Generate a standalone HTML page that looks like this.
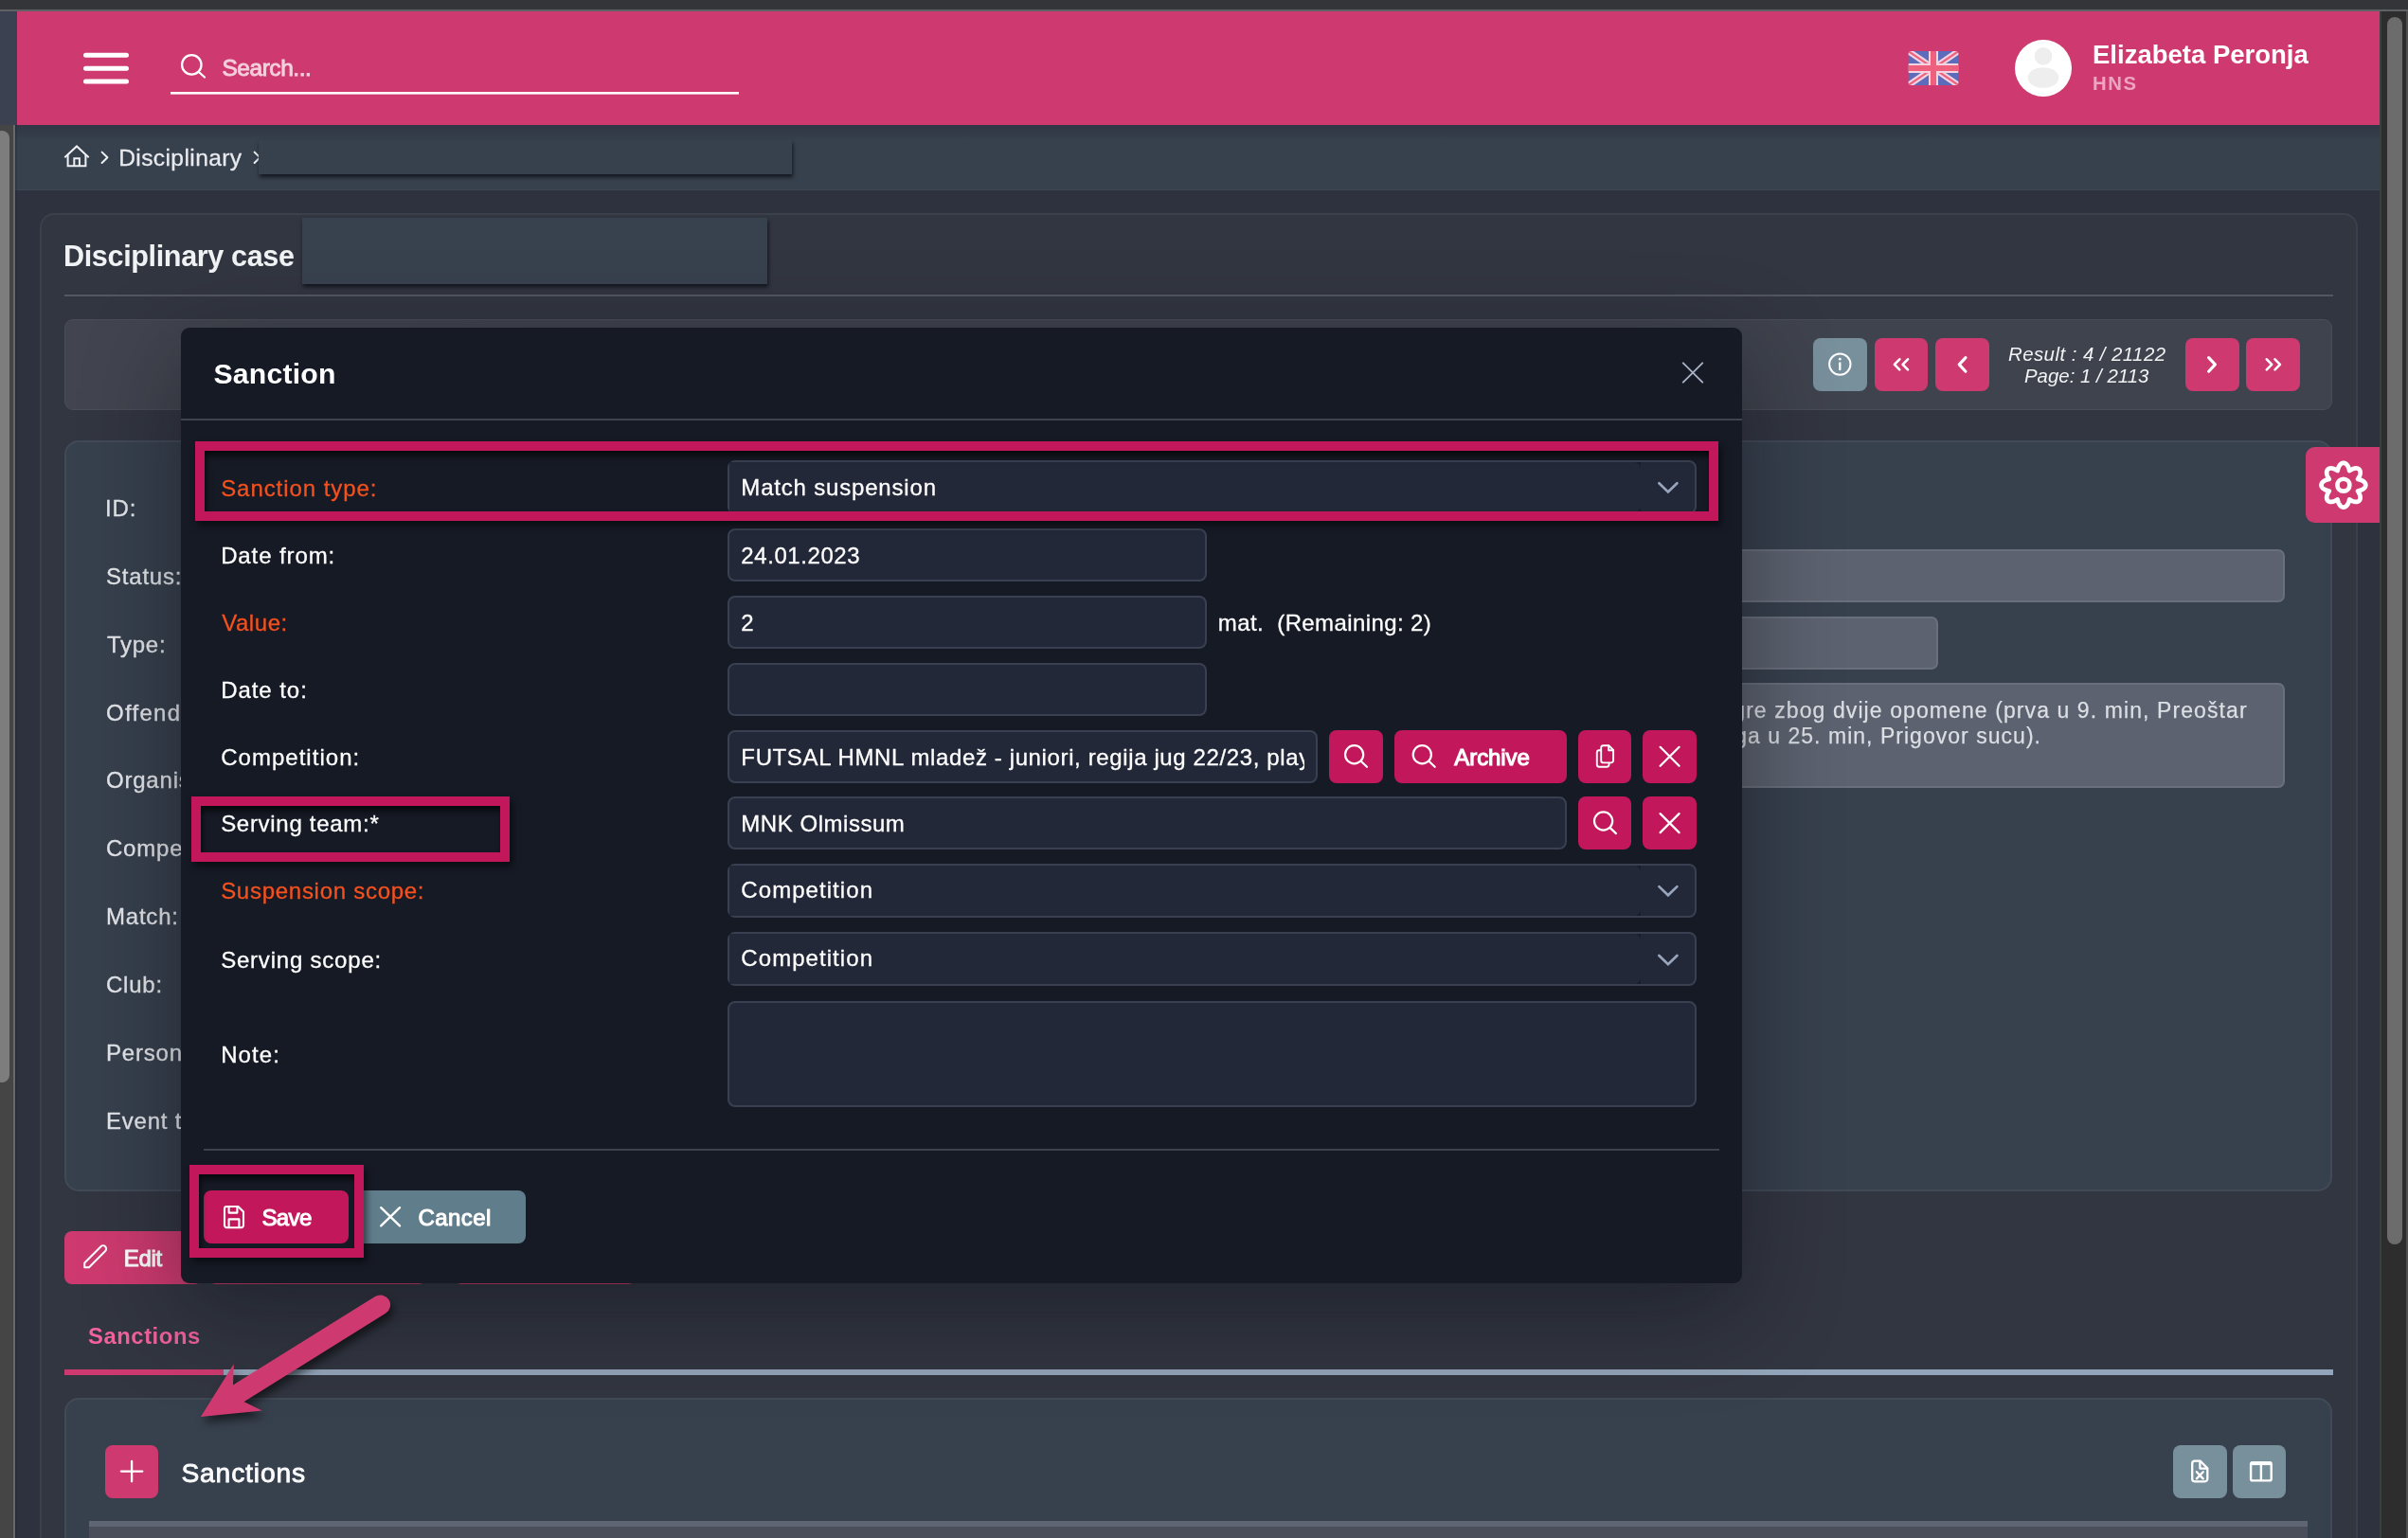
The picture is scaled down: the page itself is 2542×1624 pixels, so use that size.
<!DOCTYPE html>
<html lang="en">
<head>
<meta charset="utf-8">
<title>Disciplinary case - Sanction</title>
<style>
*{box-sizing:border-box;margin:0;padding:0}
html,body{width:2542px;height:1624px;overflow:hidden;background:#2e323f;font-family:"Liberation Sans",sans-serif}
#root{position:absolute;left:0;top:0;width:2542px;height:1624px;overflow:hidden;will-change:transform}
.a{position:absolute}
.t{position:absolute;white-space:pre;display:block}
svg{position:absolute;left:0;top:0;overflow:visible}
.pbtn{position:absolute;background:#ce3a6f;border-radius:8px}
.mbtn{position:absolute;background:#c2185b;border-radius:8px}
.gbtn{position:absolute;background:#78909c;border-radius:8px}
.fld{position:absolute;background:#5c626f;border:2px solid #696f7b;border-radius:7px}
.inp{position:absolute;background:#232838;border:2px solid #394051;border-radius:8px}
.hl{position:absolute;border:10px solid #c2185b;box-shadow:3px 5px 7px rgba(0,0,0,.5), inset 2px 6px 7px -1px rgba(0,0,0,.7)}
</style>
</head>
<body>
<div id="root">
<!-- header -->
<div class="a" style="left:18px;top:12px;width:2494.5px;height:120px;background:#ce3a6f"></div>
<svg width="2542" height="210" viewBox="0 0 2542 210">
  <g stroke="#fff" stroke-width="5" stroke-linecap="round" fill="none">
    <path d="M90.5 58.3H133.5M90.5 72.2H133.5M90.5 86.1H133.5"/>
  </g>
  <g stroke="#fff" stroke-width="2.3" stroke-linecap="round" fill="none">
    <circle cx="202.3" cy="68.4" r="10.2"/><path d="M209.8 76L216 81.5"/>
  </g>
  <rect x="180" y="97" width="600" height="2.6" fill="#fff"/>
  <!-- flag -->
  <g transform="translate(2014.5,54)">
    <clipPath id="fc"><rect x="0" y="0" width="53" height="36" rx="3.5"/></clipPath>
    <g clip-path="url(#fc)">
      <rect width="53" height="36" fill="#5c6bba"/>
      <path d="M0 0L53 36M53 0L0 36" stroke="#f3d3e0" stroke-width="6.5"/>
      <path d="M0 0L53 36M53 0L0 36" stroke="#ef5f7e" stroke-width="2.2"/>
      <path d="M26.5 0V36M0 18H53" stroke="#f3d3e0" stroke-width="10"/>
      <path d="M26.5 0V36M0 18H53" stroke="#ef5f7e" stroke-width="6"/>
    </g>
  </g>
  <!-- avatar -->
  <clipPath id="ac"><circle cx="2157" cy="72" r="30"/></clipPath>
  <circle cx="2157" cy="72" r="30" fill="#fff"/>
  <g clip-path="url(#ac)" fill="#eeeeee"><circle cx="2157" cy="59.4" r="9.3"/><ellipse cx="2157" cy="82" rx="16.3" ry="10.8"/></g>
</svg>
<span class="t" id="search" style="top:60.00px;font-size:24.5px;line-height:24.5px;color:#f4cfdc;left:234.45px;letter-spacing:-0.455px;-webkit-text-stroke:0.9px #f4cfdc;">Search...</span><span class="t" id="uname" style="top:44.00px;font-size:27.5px;line-height:27.5px;color:#ffffff;left:2209.00px;font-weight:700;letter-spacing:0.005px;">Elizabeta Peronja</span><span class="t" id="uorg" style="top:78.00px;font-size:20.3px;line-height:20.3px;color:#eda5c0;left:2209.00px;font-weight:700;letter-spacing:1.604px;">HNS</span>
<!-- breadcrumb -->
<div class="a" style="left:16px;top:132px;width:2497px;height:69px;background:#37404d;border-bottom:1.5px solid #3e4754"></div>
<div class="a" style="left:16px;top:132px;width:2497px;height:16px;background:linear-gradient(rgba(30,28,44,.28),rgba(30,28,44,0))"></div>
<svg width="2542" height="210" viewBox="0 0 2542 210">
  <g stroke="#eef0f3" stroke-width="2" fill="none" stroke-linejoin="miter" stroke-linecap="butt">
    <path d="M68.3 166.3L81 154.4L93.7 166.3"/>
    <path d="M71.6 163.6V175.3H90.4V163.6"/>
    <path d="M78.3 175.3V167.2H83.9V175.3"/>
    <path d="M107.6 160.6L113.4 166.3L107.6 172" stroke-linecap="round" stroke-linejoin="round"/>
    <path d="M268.6 160.6L274.4 166.3L268.6 172" stroke-linecap="round" stroke-linejoin="round"/>
  </g>
</svg>
<span class="t" id="bc1" style="top:155.00px;font-size:24.6px;line-height:24.6px;color:#e8eaee;left:125.15px;letter-spacing:0.388px;-webkit-text-stroke:0.3px #e8eaee;">Disciplinary</span>
<div class="a" style="left:273px;top:147.5px;width:563px;height:36.5px;background:#37404d;box-shadow:1px 3px 4px rgba(8,10,18,.75)"></div>
<!-- card -->
<div class="a" style="left:42px;top:225px;width:2446.6px;height:1460px;background:#323641;border:2px solid #3b404b;border-radius:15px"></div>
<span class="t" id="title" style="top:255.00px;font-size:30.6px;line-height:30.6px;color:#f1f2f4;left:67.00px;font-weight:700;letter-spacing:-0.374px;">Disciplinary case</span>
<div class="a" style="left:319.3px;top:230px;width:490.4px;height:69.5px;background:#38414e;box-shadow:1px 3px 4px rgba(8,10,18,.75)"></div>
<div class="a" style="left:68px;top:311px;width:2395px;height:2px;background:#525763"></div>
<!-- nav panel -->
<div class="a" style="left:68px;top:337px;width:2394px;height:96px;background:linear-gradient(90deg,#42454f 0%,#3f434d 25%);border:1.5px solid #494d57;border-radius:9px"></div>
<div class="gbtn" style="left:1914px;top:357px;width:57px;height:56px"></div>
<div class="pbtn" style="left:1979px;top:357px;width:56px;height:56px"></div>
<div class="pbtn" style="left:2043px;top:357px;width:56.5px;height:56px"></div>
<div class="pbtn" style="left:2307px;top:357px;width:56.5px;height:56px"></div>
<div class="pbtn" style="left:2371px;top:357px;width:57px;height:56px"></div>
<svg width="2542" height="1624" viewBox="0 0 2542 1624">
  <g stroke="#fff" fill="none" stroke-linecap="round" stroke-linejoin="round">
    <circle cx="1942.3" cy="384.6" r="11.2" stroke-width="2"/>
    <path d="M1942.3 383.4V390.2" stroke-width="2.3"/><circle cx="1942.3" cy="379.2" r="1.35" fill="#fff" stroke="none"/>
    <g stroke-width="2.6">
      <path d="M2005.3 379.3L1999.9 384.8L2005.3 390.3M2014 379.3L2008.6 384.8L2014 390.3"/>
      <path d="M2392.8 379.3L2398.2 384.8L2392.8 390.3M2401.5 379.3L2406.9 384.8L2401.5 390.3"/>
    </g>
    <g stroke-width="3.1">
      <path d="M2075 377.6L2068.2 384.9L2075 392.2"/>
      <path d="M2331.6 377.6L2338.4 384.9L2331.6 392.2"/>
    </g>
  </g>
</svg>
<span class="t" id="res1" style="top:364.00px;font-size:20.4px;line-height:20.4px;color:#f2f3f5;left:2120.00px;font-style:italic;letter-spacing:0.454px;">Result : 4 / 21122</span><span class="t" id="res2" style="top:387.00px;font-size:20.4px;line-height:20.4px;color:#f2f3f5;left:2137.00px;font-style:italic;letter-spacing:0.016px;">Page: 1 / 2113</span>
<!-- details panel -->
<div class="a" style="left:68px;top:465px;width:2394px;height:792.5px;background:#37404d;border:2px solid #424a58;border-radius:15px"></div>
<span class="t" id="bl0" style="top:525.00px;font-size:24.0px;line-height:24.0px;color:#e6e8ec;left:110.95px;letter-spacing:0.900px;-webkit-text-stroke:0.3px #e6e8ec;">ID:</span><span class="t" id="bl1" style="top:597.00px;font-size:24.0px;line-height:24.0px;color:#e6e8ec;left:111.95px;letter-spacing:0.810px;-webkit-text-stroke:0.3px #e6e8ec;">Status:</span><span class="t" id="bl2" style="top:669.00px;font-size:24.0px;line-height:24.0px;color:#e6e8ec;left:112.95px;letter-spacing:0.742px;-webkit-text-stroke:0.3px #e6e8ec;">Type:</span><span class="t" id="bl3" style="top:741.00px;font-size:24.0px;line-height:24.0px;color:#e6e8ec;left:111.95px;letter-spacing:1.300px;-webkit-text-stroke:0.3px #e6e8ec;">Offender:</span><span class="t" id="bl4" style="top:812.00px;font-size:24.0px;line-height:24.0px;color:#e6e8ec;left:111.95px;letter-spacing:0.800px;-webkit-text-stroke:0.3px #e6e8ec;">Organisation:</span><span class="t" id="bl5" style="top:884.00px;font-size:24.0px;line-height:24.0px;color:#e6e8ec;left:111.95px;letter-spacing:0.800px;-webkit-text-stroke:0.3px #e6e8ec;">Competition:</span><span class="t" id="bl6" style="top:956.00px;font-size:24.0px;line-height:24.0px;color:#e6e8ec;left:111.95px;letter-spacing:0.800px;-webkit-text-stroke:0.3px #e6e8ec;">Match:</span><span class="t" id="bl7" style="top:1028.00px;font-size:24.0px;line-height:24.0px;color:#e6e8ec;left:111.95px;letter-spacing:0.800px;-webkit-text-stroke:0.3px #e6e8ec;">Club:</span><span class="t" id="bl8" style="top:1100.00px;font-size:24.0px;line-height:24.0px;color:#e6e8ec;left:111.95px;letter-spacing:0.800px;-webkit-text-stroke:0.3px #e6e8ec;">Person:</span><span class="t" id="bl9" style="top:1172.00px;font-size:24.0px;line-height:24.0px;color:#e6e8ec;left:111.95px;letter-spacing:0.800px;-webkit-text-stroke:0.3px #e6e8ec;">Event type:</span>
<div class="fld" style="left:700px;top:580px;width:1712px;height:55.7px"></div>
<div class="fld" style="left:700px;top:651px;width:1346px;height:55.7px"></div>
<div class="fld" style="left:700px;top:721.2px;width:1712px;height:111.2px"></div>
<span class="t" id="desc1" style="top:739.00px;font-size:23.0px;line-height:23.0px;color:#dcdfe4;left:1823.05px;letter-spacing:1.089px;-webkit-text-stroke:0.25px #dcdfe4;">igre zbog dvije opomene (prva u 9. min, Preoštar</span><span class="t" id="desc2" style="top:766.00px;font-size:23.0px;line-height:23.0px;color:#dcdfe4;left:1730.19px;letter-spacing:1.026px;-webkit-text-stroke:0.25px #dcdfe4;">start, druga u 25. min, Prigovor sucu).</span>
<!-- settings tab -->
<div class="a" style="left:2434px;top:472px;width:78.2px;height:80px;background:#ce3a6f;border-radius:9.5px 0 0 9.5px"></div>
<svg width="2542" height="1624" viewBox="0 0 2542 1624">
  <g stroke="#fff" stroke-width="4.7" fill="none" stroke-linejoin="round"><path d="M2497.30 512.20 L2497.29 512.51 L2497.25 512.81 L2497.19 513.11 L2497.10 513.42 L2496.99 513.71 L2496.85 514.01 L2496.69 514.29 L2496.51 514.58 L2496.31 514.85 L2496.08 515.12 L2495.84 515.38 L2495.57 515.63 L2495.29 515.88 L2494.99 516.11 L2494.67 516.33 L2494.34 516.55 L2494.00 516.75 L2493.64 516.94 L2493.27 517.12 L2492.90 517.29 L2492.51 517.45 L2492.12 517.60 L2491.72 517.73 L2491.33 517.86 L2490.93 517.98 L2490.53 518.09 L2490.14 518.19 L2489.76 518.29 L2489.39 518.38 L2489.05 518.48 L2489.22 518.78 L2489.42 519.11 L2489.62 519.45 L2489.83 519.80 L2490.03 520.15 L2490.23 520.52 L2490.42 520.89 L2490.60 521.27 L2490.77 521.65 L2490.93 522.03 L2491.08 522.42 L2491.21 522.81 L2491.33 523.20 L2491.43 523.58 L2491.51 523.97 L2491.58 524.35 L2491.62 524.73 L2491.65 525.10 L2491.66 525.46 L2491.65 525.82 L2491.62 526.17 L2491.57 526.51 L2491.50 526.84 L2491.41 527.15 L2491.30 527.46 L2491.16 527.75 L2491.01 528.02 L2490.84 528.28 L2490.65 528.52 L2490.45 528.75 L2490.22 528.95 L2489.98 529.14 L2489.72 529.31 L2489.45 529.46 L2489.16 529.60 L2488.85 529.71 L2488.54 529.80 L2488.21 529.87 L2487.87 529.92 L2487.52 529.95 L2487.16 529.96 L2486.80 529.95 L2486.43 529.92 L2486.05 529.88 L2485.67 529.81 L2485.28 529.73 L2484.90 529.63 L2484.51 529.51 L2484.12 529.38 L2483.73 529.23 L2483.35 529.07 L2482.97 528.90 L2482.59 528.72 L2482.22 528.53 L2481.85 528.33 L2481.50 528.13 L2481.15 527.92 L2480.81 527.72 L2480.48 527.52 L2480.18 527.35 L2480.08 527.69 L2479.99 528.06 L2479.89 528.44 L2479.79 528.83 L2479.68 529.23 L2479.56 529.63 L2479.43 530.02 L2479.30 530.42 L2479.15 530.81 L2478.99 531.20 L2478.82 531.57 L2478.64 531.94 L2478.45 532.30 L2478.25 532.64 L2478.03 532.97 L2477.81 533.29 L2477.58 533.59 L2477.33 533.87 L2477.08 534.14 L2476.82 534.38 L2476.55 534.61 L2476.28 534.81 L2475.99 534.99 L2475.71 535.15 L2475.41 535.29 L2475.12 535.40 L2474.81 535.49 L2474.51 535.55 L2474.21 535.59 L2473.90 535.60 L2473.59 535.59 L2473.29 535.55 L2472.99 535.49 L2472.68 535.40 L2472.39 535.29 L2472.09 535.15 L2471.81 534.99 L2471.52 534.81 L2471.25 534.61 L2470.98 534.38 L2470.72 534.14 L2470.47 533.87 L2470.22 533.59 L2469.99 533.29 L2469.77 532.97 L2469.55 532.64 L2469.35 532.30 L2469.16 531.94 L2468.98 531.57 L2468.81 531.20 L2468.65 530.81 L2468.50 530.42 L2468.37 530.02 L2468.24 529.63 L2468.12 529.23 L2468.01 528.83 L2467.91 528.44 L2467.81 528.06 L2467.72 527.69 L2467.62 527.35 L2467.32 527.52 L2466.99 527.72 L2466.65 527.92 L2466.30 528.13 L2465.95 528.33 L2465.58 528.53 L2465.21 528.72 L2464.83 528.90 L2464.45 529.07 L2464.07 529.23 L2463.68 529.38 L2463.29 529.51 L2462.90 529.63 L2462.52 529.73 L2462.13 529.81 L2461.75 529.88 L2461.37 529.92 L2461.00 529.95 L2460.64 529.96 L2460.28 529.95 L2459.93 529.92 L2459.59 529.87 L2459.26 529.80 L2458.95 529.71 L2458.64 529.60 L2458.35 529.46 L2458.08 529.31 L2457.82 529.14 L2457.58 528.95 L2457.35 528.75 L2457.15 528.52 L2456.96 528.28 L2456.79 528.02 L2456.64 527.75 L2456.50 527.46 L2456.39 527.15 L2456.30 526.84 L2456.23 526.51 L2456.18 526.17 L2456.15 525.82 L2456.14 525.46 L2456.15 525.10 L2456.18 524.73 L2456.22 524.35 L2456.29 523.97 L2456.37 523.58 L2456.47 523.20 L2456.59 522.81 L2456.72 522.42 L2456.87 522.03 L2457.03 521.65 L2457.20 521.27 L2457.38 520.89 L2457.57 520.52 L2457.77 520.15 L2457.97 519.80 L2458.18 519.45 L2458.38 519.11 L2458.58 518.78 L2458.75 518.48 L2458.41 518.38 L2458.04 518.29 L2457.66 518.19 L2457.27 518.09 L2456.87 517.98 L2456.47 517.86 L2456.08 517.73 L2455.68 517.60 L2455.29 517.45 L2454.90 517.29 L2454.53 517.12 L2454.16 516.94 L2453.80 516.75 L2453.46 516.55 L2453.13 516.33 L2452.81 516.11 L2452.51 515.88 L2452.23 515.63 L2451.96 515.38 L2451.72 515.12 L2451.49 514.85 L2451.29 514.58 L2451.11 514.29 L2450.95 514.01 L2450.81 513.71 L2450.70 513.42 L2450.61 513.11 L2450.55 512.81 L2450.51 512.51 L2450.50 512.20 L2450.51 511.89 L2450.55 511.59 L2450.61 511.29 L2450.70 510.98 L2450.81 510.69 L2450.95 510.39 L2451.11 510.11 L2451.29 509.82 L2451.49 509.55 L2451.72 509.28 L2451.96 509.02 L2452.23 508.77 L2452.51 508.52 L2452.81 508.29 L2453.13 508.07 L2453.46 507.85 L2453.80 507.65 L2454.16 507.46 L2454.53 507.28 L2454.90 507.11 L2455.29 506.95 L2455.68 506.80 L2456.08 506.67 L2456.47 506.54 L2456.87 506.42 L2457.27 506.31 L2457.66 506.21 L2458.04 506.11 L2458.41 506.02 L2458.75 505.92 L2458.58 505.62 L2458.38 505.29 L2458.18 504.95 L2457.97 504.60 L2457.77 504.25 L2457.57 503.88 L2457.38 503.51 L2457.20 503.13 L2457.03 502.75 L2456.87 502.37 L2456.72 501.98 L2456.59 501.59 L2456.47 501.20 L2456.37 500.82 L2456.29 500.43 L2456.22 500.05 L2456.18 499.67 L2456.15 499.30 L2456.14 498.94 L2456.15 498.58 L2456.18 498.23 L2456.23 497.89 L2456.30 497.56 L2456.39 497.25 L2456.50 496.94 L2456.64 496.65 L2456.79 496.38 L2456.96 496.12 L2457.15 495.88 L2457.35 495.65 L2457.58 495.45 L2457.82 495.26 L2458.08 495.09 L2458.35 494.94 L2458.64 494.80 L2458.95 494.69 L2459.26 494.60 L2459.59 494.53 L2459.93 494.48 L2460.28 494.45 L2460.64 494.44 L2461.00 494.45 L2461.37 494.48 L2461.75 494.52 L2462.13 494.59 L2462.52 494.67 L2462.90 494.77 L2463.29 494.89 L2463.68 495.02 L2464.07 495.17 L2464.45 495.33 L2464.83 495.50 L2465.21 495.68 L2465.58 495.87 L2465.95 496.07 L2466.30 496.27 L2466.65 496.48 L2466.99 496.68 L2467.32 496.88 L2467.62 497.05 L2467.72 496.71 L2467.81 496.34 L2467.91 495.96 L2468.01 495.57 L2468.12 495.17 L2468.24 494.77 L2468.37 494.38 L2468.50 493.98 L2468.65 493.59 L2468.81 493.20 L2468.98 492.83 L2469.16 492.46 L2469.35 492.10 L2469.55 491.76 L2469.77 491.43 L2469.99 491.11 L2470.22 490.81 L2470.47 490.53 L2470.72 490.26 L2470.98 490.02 L2471.25 489.79 L2471.52 489.59 L2471.81 489.41 L2472.09 489.25 L2472.39 489.11 L2472.68 489.00 L2472.99 488.91 L2473.29 488.85 L2473.59 488.81 L2473.90 488.80 L2474.21 488.81 L2474.51 488.85 L2474.81 488.91 L2475.12 489.00 L2475.41 489.11 L2475.71 489.25 L2475.99 489.41 L2476.28 489.59 L2476.55 489.79 L2476.82 490.02 L2477.08 490.26 L2477.33 490.53 L2477.58 490.81 L2477.81 491.11 L2478.03 491.43 L2478.25 491.76 L2478.45 492.10 L2478.64 492.46 L2478.82 492.83 L2478.99 493.20 L2479.15 493.59 L2479.30 493.98 L2479.43 494.38 L2479.56 494.77 L2479.68 495.17 L2479.79 495.57 L2479.89 495.96 L2479.99 496.34 L2480.08 496.71 L2480.18 497.05 L2480.48 496.88 L2480.81 496.68 L2481.15 496.48 L2481.50 496.27 L2481.85 496.07 L2482.22 495.87 L2482.59 495.68 L2482.97 495.50 L2483.35 495.33 L2483.73 495.17 L2484.12 495.02 L2484.51 494.89 L2484.90 494.77 L2485.28 494.67 L2485.67 494.59 L2486.05 494.52 L2486.43 494.48 L2486.80 494.45 L2487.16 494.44 L2487.52 494.45 L2487.87 494.48 L2488.21 494.53 L2488.54 494.60 L2488.85 494.69 L2489.16 494.80 L2489.45 494.94 L2489.72 495.09 L2489.98 495.26 L2490.22 495.45 L2490.45 495.65 L2490.65 495.88 L2490.84 496.12 L2491.01 496.38 L2491.16 496.65 L2491.30 496.94 L2491.41 497.25 L2491.50 497.56 L2491.57 497.89 L2491.62 498.23 L2491.65 498.58 L2491.66 498.94 L2491.65 499.30 L2491.62 499.67 L2491.58 500.05 L2491.51 500.43 L2491.43 500.82 L2491.33 501.20 L2491.21 501.59 L2491.08 501.98 L2490.93 502.37 L2490.77 502.75 L2490.60 503.13 L2490.42 503.51 L2490.23 503.88 L2490.03 504.25 L2489.83 504.60 L2489.62 504.95 L2489.42 505.29 L2489.22 505.62 L2489.05 505.92 L2489.39 506.02 L2489.76 506.11 L2490.14 506.21 L2490.53 506.31 L2490.93 506.42 L2491.33 506.54 L2491.72 506.67 L2492.12 506.80 L2492.51 506.95 L2492.90 507.11 L2493.27 507.28 L2493.64 507.46 L2494.00 507.65 L2494.34 507.85 L2494.67 508.07 L2494.99 508.29 L2495.29 508.52 L2495.57 508.77 L2495.84 509.02 L2496.08 509.28 L2496.31 509.55 L2496.51 509.82 L2496.69 510.11 L2496.85 510.39 L2496.99 510.69 L2497.10 510.98 L2497.19 511.29 L2497.25 511.59 L2497.29 511.89 Z"/><circle cx="2473.9" cy="512.2" r="6.45"/></g>
</svg>
<!-- action buttons row -->
<div class="pbtn" style="left:68px;top:1300px;width:145px;height:56px"></div>
<div class="pbtn" style="left:219.5px;top:1300px;width:230.5px;height:56px"></div>
<div class="pbtn" style="left:478.8px;top:1300px;width:192.2px;height:56px"></div>
<svg width="2542" height="1624" viewBox="0 0 2542 1624">
  <g stroke="#fff" stroke-width="2" fill="none" stroke-linejoin="round" stroke-linecap="round">
    <path d="M89.24 1338.17L89.24 1333.47L106.49 1316.22A3.32 3.32 0 0 1 111.19 1320.92L93.94 1338.17Z"/>
  </g>
</svg>
<span class="t" id="edit" style="top:1317.00px;font-size:24.0px;line-height:24.0px;color:#ffffff;left:130.80px;letter-spacing:-0.296px;-webkit-text-stroke:1.0px #ffffff;">Edit</span>
<!-- tabs -->
<span class="t" id="tab" style="top:1399.00px;font-size:23.8px;line-height:23.8px;color:#f3629c;left:93.00px;font-weight:700;letter-spacing:0.564px;">Sanctions</span>
<div class="a" style="left:68px;top:1446px;width:2395px;height:6px;background:#93a5ba"></div>
<div class="a" style="left:68px;top:1446px;width:167.8px;height:6px;background:#ce3a6f"></div>
<!-- sanctions panel -->
<div class="a" style="left:68px;top:1475.6px;width:2394px;height:200px;background:#37404d;border:2px solid #424a58;border-radius:15px"></div>
<div class="pbtn" style="left:111px;top:1526px;width:56.3px;height:56px"></div>
<div class="gbtn" style="left:2294px;top:1526px;width:57px;height:56px"></div>
<div class="gbtn" style="left:2357px;top:1526px;width:56px;height:56px"></div>
<svg width="2542" height="1624" viewBox="0 0 2542 1624">
  <g stroke="#fff" stroke-width="2.3" fill="none" stroke-linecap="round" stroke-linejoin="round">
    <path d="M139.1 1542.9V1564.3M127.9 1553.6H150.3"/>
  </g>
  <g stroke="#fff" stroke-width="2.3" fill="none" stroke-linecap="round" stroke-linejoin="round">
    <path d="M2322.6 1542.6H2316.9a2.7 2.7 0 0 0 -2.7 2.7V1561.6a2.7 2.7 0 0 0 2.7 2.7H2327.6a2.7 2.7 0 0 0 2.7 -2.7V1550.4Z"/>
    <path d="M2322.4 1543V1550.6H2330"/>
    <path d="M2318.9 1554.2L2325.7 1561.4M2325.7 1554.2L2318.9 1561.4"/>
  </g>
  <g stroke="#fff" stroke-width="2.4" fill="none" stroke-linejoin="round">
    <rect x="2376.1" y="1544.4" width="21.6" height="19" rx="1.6"/><path d="M2386.9 1544.4V1563.4"/><path d="M2376.1 1545.2H2397.7" stroke-width="3.8"/>
  </g>
</svg>
<span class="t" id="sanh" style="top:1541.00px;font-size:28.2px;line-height:28.2px;color:#fbfbfc;left:191.43px;letter-spacing:0.857px;-webkit-text-stroke:0.85px #fbfbfc;">Sanctions</span>
<div class="a" style="left:94px;top:1606px;width:2342px;height:30px;background:#4a4f5b"></div>
<div class="a" style="left:94px;top:1606px;width:2342px;height:6px;background:#5f6572"></div>

<!-- modal -->
<div class="a" style="left:191px;top:346px;width:1648px;height:1009px;background:#161a25;border-radius:9px;box-shadow:0 30px 100px 0 rgba(10,12,20,.46)"></div>
<div class="a" style="left:191px;top:442.4px;width:1648px;height:2px;background:#3e434f"></div>
<span class="t" id="mtitle" style="top:380.00px;font-size:30.2px;line-height:30.2px;color:#ffffff;left:225.50px;font-weight:700;letter-spacing:0.210px;">Sanction</span>
<svg width="2542" height="1624" viewBox="0 0 2542 1624">
  <path d="M1776.8 383.3L1797.2 403.7M1797.2 383.3L1776.8 403.7" stroke="#a9b3c6" stroke-width="1.9" stroke-linecap="round" fill="none"/>
</svg>
<span class="t" id="l0" style="top:504.00px;font-size:24.0px;line-height:24.0px;color:#f4511e;left:233.15px;letter-spacing:0.944px;-webkit-text-stroke:0.3px #f4511e;">Sanction type:</span><span class="t" id="l1" style="top:575.00px;font-size:24.0px;line-height:24.0px;color:#ffffff;left:233.15px;letter-spacing:0.893px;-webkit-text-stroke:0.3px #ffffff;">Date from:</span><span class="t" id="l2" style="top:646.00px;font-size:24.0px;line-height:24.0px;color:#f4511e;left:234.15px;letter-spacing:0.560px;-webkit-text-stroke:0.3px #f4511e;">Value:</span><span class="t" id="l3" style="top:717.00px;font-size:24.0px;line-height:24.0px;color:#ffffff;left:233.15px;letter-spacing:0.946px;-webkit-text-stroke:0.3px #ffffff;">Date to:</span><span class="t" id="l4" style="top:788.00px;font-size:24.0px;line-height:24.0px;color:#ffffff;left:233.15px;letter-spacing:1.031px;-webkit-text-stroke:0.3px #ffffff;">Competition:</span><span class="t" id="l5" style="top:858.00px;font-size:24.0px;line-height:24.0px;color:#ffffff;left:233.15px;letter-spacing:0.710px;-webkit-text-stroke:0.3px #ffffff;">Serving team:*</span><span class="t" id="l6" style="top:929.00px;font-size:24.0px;line-height:24.0px;color:#f4511e;left:233.15px;letter-spacing:0.723px;-webkit-text-stroke:0.3px #f4511e;">Suspension scope:</span><span class="t" id="l7" style="top:1002.00px;font-size:24.0px;line-height:24.0px;color:#ffffff;left:233.15px;letter-spacing:0.793px;-webkit-text-stroke:0.3px #ffffff;">Serving scope:</span><span class="t" id="l8" style="top:1102.00px;font-size:24.0px;line-height:24.0px;color:#ffffff;left:233.15px;letter-spacing:1.076px;-webkit-text-stroke:0.3px #ffffff;">Note:</span>
<!-- inputs -->
<div class="inp" style="left:768px;top:486px;width:1023px;height:57px"></div>
<div class="inp" style="left:768px;top:558px;width:505.7px;height:56px"></div>
<div class="inp" style="left:768px;top:629px;width:505.7px;height:56px"></div>
<div class="inp" style="left:768px;top:700px;width:505.7px;height:56px"></div>
<div class="inp" style="left:768px;top:771px;width:622.6px;height:56px"></div>
<div class="inp" style="left:768px;top:841px;width:886px;height:56px"></div>
<div class="inp" style="left:768px;top:912px;width:1023px;height:57px"></div>
<div class="inp" style="left:768px;top:984px;width:1023px;height:57px"></div>
<div class="inp" style="left:768px;top:1057px;width:1023px;height:112px"></div>
<!-- select trigger separators -->
<div class="a" style="left:1726px;top:488px;width:6px;height:53px;background:#1a1e2c"></div>
<div class="a" style="left:770px;top:488px;width:961.5px;height:53px;background:#232838;border-radius:0 7px 7px 0"></div>
<div class="a" style="left:1726px;top:914px;width:6px;height:53px;background:#1a1e2c"></div>
<div class="a" style="left:770px;top:914px;width:961.5px;height:53px;background:#232838;border-radius:0 7px 7px 0"></div>
<div class="a" style="left:1726px;top:986px;width:6px;height:53px;background:#1a1e2c"></div>
<div class="a" style="left:770px;top:986px;width:961.5px;height:53px;background:#232838;border-radius:0 7px 7px 0"></div>
<span class="t" id="v0" style="top:503.00px;font-size:24.0px;line-height:24.0px;color:#ffffff;left:782.35px;letter-spacing:0.814px;-webkit-text-stroke:0.3px #ffffff;">Match suspension</span><span class="t" id="v1" style="top:575.00px;font-size:24.0px;line-height:24.0px;color:#ffffff;left:782.35px;letter-spacing:0.570px;-webkit-text-stroke:0.3px #ffffff;">24.01.2023</span><span class="t" id="v2" style="top:646.00px;font-size:24.0px;line-height:24.0px;color:#ffffff;left:782.35px;-webkit-text-stroke:0.3px #ffffff;">2</span>
<div class="a" style="left:0;top:0;width:1377px;height:1624px;overflow:hidden"><span class="t" id="v4" style="top:788.00px;font-size:24.0px;line-height:24.0px;color:#ffffff;left:782.35px;letter-spacing:0.623px;-webkit-text-stroke:0.3px #ffffff;">FUTSAL HMNL mladež - juniori, regija jug 22/23, play-off</span></div>
<span class="t" id="v5" style="top:858.00px;font-size:24.0px;line-height:24.0px;color:#ffffff;left:782.35px;letter-spacing:0.530px;-webkit-text-stroke:0.3px #ffffff;">MNK Olmissum</span><span class="t" id="v6" style="top:928.00px;font-size:24.0px;line-height:24.0px;color:#ffffff;left:782.35px;letter-spacing:1.059px;-webkit-text-stroke:0.3px #ffffff;">Competition</span><span class="t" id="v7" style="top:1000.00px;font-size:24.0px;line-height:24.0px;color:#ffffff;left:782.35px;letter-spacing:1.059px;-webkit-text-stroke:0.3px #ffffff;">Competition</span><span class="t" id="mat" style="top:646.00px;font-size:24.0px;line-height:24.0px;color:#ffffff;left:1285.85px;letter-spacing:0.399px;-webkit-text-stroke:0.3px #ffffff;">mat.  (Remaining: 2)</span>
<!-- buttons -->
<div class="mbtn" style="left:1403.2px;top:771px;width:56.6px;height:56px"></div>
<div class="mbtn" style="left:1472px;top:771px;width:182px;height:56px"></div>
<div class="mbtn" style="left:1666px;top:771px;width:56.2px;height:56px"></div>
<div class="mbtn" style="left:1734px;top:771px;width:56.8px;height:56px"></div>
<div class="mbtn" style="left:1666px;top:841px;width:56.2px;height:56px"></div>
<div class="mbtn" style="left:1734px;top:841px;width:56.8px;height:56px"></div>
<span class="t" id="arch" style="top:788.00px;font-size:24.0px;line-height:24.0px;color:#ffffff;left:1535.35px;letter-spacing:-0.097px;-webkit-text-stroke:1.1px #ffffff;">Archive</span>
<svg width="2542" height="1624" viewBox="0 0 2542 1624">
  <g stroke="#97a5bd" stroke-width="2.7" fill="none" stroke-linecap="round" stroke-linejoin="miter">
    <path d="M1751.4 510.2L1760.9 519.4L1770.4 510.2"/>
    <path d="M1751.4 936.1L1760.9 945.3L1770.4 936.1"/>
    <path d="M1751.4 1009L1760.9 1018.2L1770.4 1009"/>
  </g>
  <g stroke="#fff" stroke-width="2.2" fill="none" stroke-linecap="round" stroke-linejoin="round">
    <circle cx="1429.6" cy="796.7" r="9.6"/><path d="M1436.7 803.8L1443 809.8"/>
    <circle cx="1501.3" cy="796.7" r="9.6"/><path d="M1508.4 803.8L1514.7 809.8"/>
    <circle cx="1692.6" cy="867" r="9.6"/><path d="M1699.7 874.1L1706 880.1"/>
    <path d="M1752.6 788.8L1772.6 808.8M1772.6 788.8L1752.6 808.8"/>
    <path d="M1752.6 859.1L1772.6 879.1M1772.6 859.1L1752.6 879.1"/>
  </g>
  <!-- copy icon -->
  <g stroke="#fff" stroke-width="1.9" fill="none" stroke-linecap="round" stroke-linejoin="round">
    <path d="M1698.3 787.2H1692.6a2.4 2.4 0 0 0 -2.4 2.4V803a2.4 2.4 0 0 0 2.4 2.4H1700.7a2.4 2.4 0 0 0 2.4 -2.4V792Z"/>
    <path d="M1698.1 787.5V792.2H1702.9"/>
    <path d="M1698.6 805.6V807.3a2.4 2.4 0 0 1 -2.4 2.4H1688.2a2.4 2.4 0 0 1 -2.4 -2.4V794.6a2.4 2.4 0 0 1 2.4 -2.4H1690"/>
  </g>
</svg>
<!-- footer -->
<div class="a" style="left:215px;top:1213.2px;width:1600px;height:1.6px;background:#3d424e"></div>
<div class="mbtn" style="left:215px;top:1257px;width:153.3px;height:56px"></div>
<div class="a" style="left:376px;top:1257px;width:179px;height:56px;background:#607d8b;border-radius:8px"></div>
<svg width="2542" height="1624" viewBox="0 0 2542 1624">
  <g stroke="#fff" stroke-width="2.1" fill="none" stroke-linecap="round" stroke-linejoin="round">
    <path d="M239.4 1274H251.4L257 1279.6V1293.8a2.4 2.4 0 0 1 -2.4 2.4H239.4a2.4 2.4 0 0 1 -2.4 -2.4V1276.4a2.4 2.4 0 0 1 2.4 -2.4Z"/>
    <path d="M241.6 1274.2V1280.6H250.4V1274.2"/>
    <path d="M241.6 1296V1287.4H252.4V1296"/>
  </g>
  <path d="M402.2 1275.2L422 1294.4M422 1275.2L402.2 1294.4" stroke="#fff" stroke-width="2.4" stroke-linecap="round" fill="none"/>
</svg>
<span class="t" id="save" style="top:1274.00px;font-size:24.0px;line-height:24.0px;color:#ffffff;left:276.50px;letter-spacing:-0.652px;-webkit-text-stroke:1.0px #ffffff;">Save</span><span class="t" id="cancel" style="top:1274.00px;font-size:24.0px;line-height:24.0px;color:#ffffff;left:441.50px;letter-spacing:0.405px;-webkit-text-stroke:1.0px #ffffff;">Cancel</span>

<!-- annotations -->
<div class="hl" style="left:206px;top:466px;width:1608px;height:84px"></div>
<div class="hl" style="left:202.3px;top:840.7px;width:336px;height:69.3px"></div>
<div class="hl" style="left:200px;top:1230px;width:184px;height:97.8px"></div>
<svg width="2542" height="1624" viewBox="0 0 2542 1624" style="filter:drop-shadow(3px 6px 5px rgba(0,0,0,.55))">
  <path d="M401.5 1377.9L247.4 1474" stroke="#ce3a6f" stroke-width="21" stroke-linecap="round" fill="none"/>
  <path d="M211.9 1496.1L246.8 1440.2L246 1462.7L257.3 1480.1L276.7 1489.6Z" fill="#ce3a6f"/>
</svg>

<!-- browser chrome -->
<div class="a" style="left:0;top:0;width:2542px;height:10px;background:#343539"></div>
<div class="a" style="left:0;top:10px;width:2542px;height:2px;background:#5e6265"></div>
<div class="a" style="left:0;top:12px;width:18px;height:120px;background:#3b4151"></div>
<div class="a" style="left:0;top:132px;width:14px;height:1492px;background:#454545"></div>
<div class="a" style="left:14px;top:132px;width:2px;height:1492px;background:#696969"></div>
<div class="a" style="left:16px;top:132px;width:2px;height:1492px;background:rgba(30,34,46,.3)"></div>
<div class="a" style="left:-6px;top:137.8px;width:16.1px;height:1005.3px;background:#7d7d7d;border-radius:9px"></div>
<div class="a" style="left:2512px;top:12px;width:30px;height:1612px;background:#2d2d2d;border-left:2px solid #3a3f40;border-right:2px solid #4f4f4f"></div>
<div class="a" style="left:2520px;top:17.8px;width:16px;height:1296px;background:#6c6c6c;border-radius:8px"></div>

</div>
</body>
</html>
